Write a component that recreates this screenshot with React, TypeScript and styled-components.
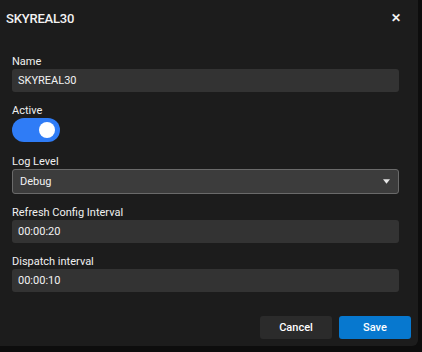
import React from 'react';
import styled, { createGlobalStyle } from 'styled-components';

const GlobalStyle = createGlobalStyle`
    html, body {
        margin: 0;
        padding: 0;
        background: #0d0d0d;
    }
    body {
        font-family: Roboto, "Liberation Sans", sans-serif;
    }
`;

interface FieldProps {
    label: string;
    value: string;
}

const TextField = ({ label, value }: FieldProps) => (
    <Field>
        <Label>{label}</Label>
        <Input>{value}</Input>
    </Field>
);

export default function App() {
    return (
        <>
            <GlobalStyle />
            <Page>
                <Dialog>
                    <Header>
                        <Title>SKYREAL30</Title>
                        <Close>✕</Close>
                    </Header>
                    <Body>
                        <TextField label="Name" value="SKYREAL30" />
                        <Field>
                            <Label>Active</Label>
                            <Toggle>
                                <Knob />
                            </Toggle>
                        </Field>
                        <Field>
                            <Label>Log Level</Label>
                            <Select>
                                <span>Debug</span>
                                <Caret viewBox="0 0 8 5">
                                    <path d="M0 0h8L4 5z" fill="#e6e6e6" />
                                </Caret>
                            </Select>
                        </Field>
                        <TextField label="Refresh Config Interval" value="00:00:20" />
                        <TextField label="Dispatch interval" value="00:00:10" />
                    </Body>
                    <Footer>
                        <Button>Cancel</Button>
                        <Button $primary>Save</Button>
                    </Footer>
                </Dialog>
            </Page>
        </>
    );
}

const Page = styled.div`
    width: 422px;
    height: 352px;
    padding: 0 4px 6px 0;
    box-sizing: border-box;
`;

const Dialog = styled.div`
    width: 418px;
    height: 346px;
    background: #1c1c1c;
    border-radius: 0 0 6px 0;
    color: #f2f2f2;
    box-sizing: border-box;
    display: flex;
    flex-direction: column;
`;

const Header = styled.div`
    height: 36px;
    display: flex;
    align-items: center;
    justify-content: space-between;
    padding: 0 17px 0 6px;
`;

const Title = styled.div`
    font-size: 13px;
    font-weight: 500;
    letter-spacing: -0.2px;
`;

const Close = styled.div`
    font-size: 12px;
    font-weight: 700;
`;

const Body = styled.div`
    display: flex;
    flex-direction: column;
    gap: 13px;
    padding: 20px 19px 0 12px;
`;

const Field = styled.div`
    display: flex;
    flex-direction: column;
    gap: 1px;
`;

const Label = styled.div`
    font-size: 11px;
    line-height: 12px;
    color: #f0f0f0;
`;

const Input = styled.div`
    height: 23px;
    background: #333333;
    border-radius: 3px;
    font-size: 11px;
    display: flex;
    align-items: center;
    padding: 0 6px;
`;

const Toggle = styled.div`
    width: 48px;
    height: 24px;
    border-radius: 12px;
    background: #2f7cf6;
    position: relative;
    margin-bottom: 1px;
`;

const Knob = styled.div`
    position: absolute;
    right: 5px;
    top: 4px;
    width: 16px;
    height: 16px;
    border-radius: 50%;
    background: #ffffff;
`;

const Select = styled.div`
    height: 23px;
    background: #3c3c3c;
    border: 1px solid #6a6a6a;
    border-radius: 3px;
    font-size: 11px;
    display: flex;
    align-items: center;
    justify-content: space-between;
    padding: 0 8px 0 7px;
`;

const Caret = styled.svg`
    width: 7px;
    height: 5px;
`;

const Footer = styled.div`
    margin-top: auto;
    display: flex;
    justify-content: flex-end;
    gap: 7px;
    padding: 0 7px 7px 0;
`;

const Button = styled.button<{ $primary?: boolean }>`
    width: 72px;
    height: 23px;
    border: none;
    border-radius: 3px;
    background: ${({ $primary }) => ($primary ? '#0778cf' : '#2b2b2b')};
    color: #ffffff;
    font-family: Roboto, "Liberation Sans", sans-serif;
    font-size: 11px;
    font-weight: 500;
`;
